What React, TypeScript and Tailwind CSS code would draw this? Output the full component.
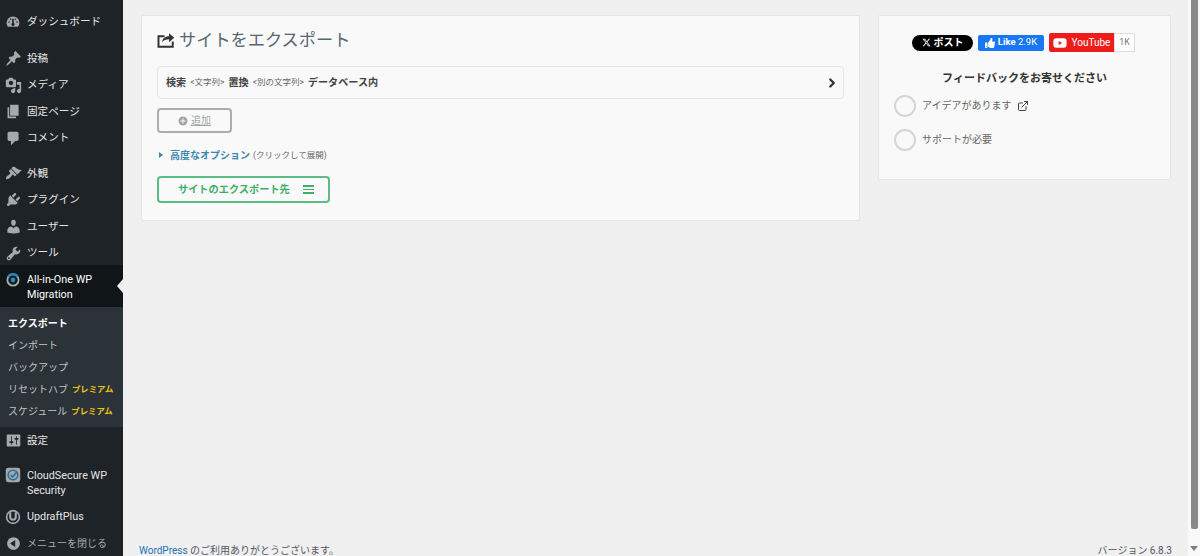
import React from "react";
import { FaThumbsUp, FaYoutube } from "react-icons/fa";
import { FaXTwitter } from "react-icons/fa6";
import { FiExternalLink, FiChevronRight } from "react-icons/fi";

const jp = "font-['Roboto','Noto_Sans_CJK_JP',sans-serif]";

const I = ({ d, cls = "" }: { d: string; cls?: string }) => (
  <svg viewBox="0 0 20 20" className={"fill-[#a7aaad] " + cls}>
    <path d={d} />
  </svg>
);

const icons: Record<string, string> = {
  dash: "M3.76 16h12.48A7.96 7.96 0 0 0 18 11a8 8 0 1 0-16 0c0 1.9.66 3.64 1.76 5zM10 15a2 2 0 0 1-1-3.73V6h2v5.27A2 2 0 0 1 10 15zM5 11a1 1 0 1 1 0-2 1 1 0 0 1 0 2zm10 0a1 1 0 1 1 0-2 1 1 0 0 1 0 2zM7 7.5a1 1 0 1 1 0-2 1 1 0 0 1 0 2zm6 0a1 1 0 1 1 0-2 1 1 0 0 1 0 2z",
  pin: "M10.44 3.02l1.82-1.82 6.36 6.35-1.83 1.82c-1.05-.68-2.48-.57-3.41.36l-.75.75c-.92.93-1.04 2.35-.35 3.41l-1.83 1.82-2.41-2.41-2.8 2.79c-.42.42-3.38 2.71-3.8 2.29s1.86-3.39 2.28-3.81l2.79-2.79L4.1 9.36l1.83-1.82c1.05.69 2.48.57 3.4-.36l.75-.75c.93-.92 1.05-2.35.36-3.41z",
  media: "M13 11V4c0-.55-.45-1-1-1h-1.67L9 1H5L3.67 3H2c-.55 0-1 .45-1 1v7c0 .55.45 1 1 1h10c.55 0 1-.45 1-1zM7 4.5c1.38 0 2.5 1.12 2.5 2.5S8.38 9.5 7 9.5 4.5 8.38 4.5 7 5.62 4.5 7 4.5zM14 6h5v10.5c0 1.38-1.12 2.5-2.5 2.5S14 17.88 14 16.5s1.12-2.5 2.5-2.5c.17 0 .34.02.5.05V9h-3V6zm-4 8.05V13h2v3.5c0 1.38-1.12 2.5-2.5 2.5S7 17.88 7 16.5 8.12 14 9.5 14c.17 0 .34.02.5.05z",
  page: "M6 15V2h10v13H6zm-1 1h8v2H3V5h2v11z",
  comment: "M5 2h9c1.1 0 2 .9 2 2v7c0 1.1-.9 2-2 2h-2l-5 5v-5H5c-1.1 0-2-.9-2-2V4c0-1.1.9-2 2-2z",
  brush: "M14.48 11.06L7.41 3.99l1.5-1.5c.5-.56 2.3-.47 3.51.32 1.21.8 1.43 1.28 2.91 2.1 1.18.64 2.45 1.26 4.45.85zm-.71.71L6.7 4.7 4.93 6.47c-.39.39-.39 1.02 0 1.41l1.06 1.06c.39.39.39 1.03 0 1.42-.6.6-1.43 1.11-2.21 1.69-.35.26-.7.53-1.01.84C1.43 13.23.78 15.81 1.4 16.43c.63.62 3.21-.02 4.55-1.37.31-.31.58-.66.84-1.01.58-.78 1.09-1.61 1.69-2.21.39-.39 1.02-.39 1.41 0l1.06 1.06c.39.39 1.03.39 1.42 0z",
  plugin: "M13.11 4.36L9.87 7.6 8 5.73l3.24-3.24c.35-.34 1.05-.2 1.56.32.52.51.66 1.21.31 1.55zm-8 1.77l.91-1.12 9.01 9.01-1.19.84c-.71.71-2.63 1.16-3.82 1.16H6.14L4.9 17.26c-.59.59-1.54.59-2.12 0-.59-.58-.59-1.53 0-2.12l1.24-1.24v-3.88c0-1.13.4-3.19 1.09-3.89zm7.26 3.97l3.24-3.24c.34-.35 1.04-.21 1.55.31.52.51.66 1.21.31 1.55l-3.24 3.25z",
  user: "M10 9.25c-2.27 0-2.73-3.44-2.73-3.44C7 4.02 7.82 2 9.97 2c2.16 0 2.98 2.02 2.71 3.81 0 0-.41 3.44-2.68 3.44zm0 2.57L12.72 10c2.39 0 4.52 2.33 4.52 4.53v2.49s-3.65 1.13-7.24 1.13c-3.65 0-7.24-1.13-7.24-1.13v-2.49c0-2.25 1.94-4.48 4.47-4.48z",
  tool: "M16.68 9.77c-1.34 1.34-3.3 1.67-4.95.99l-5.41 6.52c-.99.99-2.59.99-3.58 0s-.99-2.59 0-3.57l6.52-5.42c-.68-1.65-.35-3.61.99-4.95 1.28-1.28 3.12-1.62 4.72-1.06l-2.89 2.89 2.82 2.82 2.86-2.87c.53 1.58.18 3.39-1.08 4.65zM3.81 16.21c.4.39 1.04.39 1.43 0 .4-.4.4-1.04 0-1.43-.39-.4-1.03-.4-1.43 0-.39.39-.39 1.03 0 1.43z",
  settings: "M18 16V4c0-.55-.45-1-1-1H3c-.55 0-1 .45-1 1v12c0 .55.45 1 1 1h14c.55 0 1-.45 1-1zM8 11h1c.55 0 1 .45 1 1s-.45 1-1 1H8v1.5c0 .28-.22.5-.5.5s-.5-.22-.5-.5V13H6c-.55 0-1-.45-1-1s.45-1 1-1h1V5.5c0-.28.22-.5.5-.5s.5.22.5.5V11zm5-2h-1c-.55 0-1-.45-1-1s.45-1 1-1h1V5.5c0-.28.22-.5.5-.5s.5.22.5.5V7h1c.55 0 1 .45 1 1s-.45 1-1 1h-1v5.5c0 .28-.22.5-.5.5s-.5-.22-.5-.5V9z",
  collapse: "M10 2.5c-4.14 0-7.5 3.36-7.5 7.5s3.36 7.5 7.5 7.5 7.5-3.36 7.5-7.5-3.36-7.5-7.5-7.5zM12 14l-6-4 6-4v8z",
};

function Item({ icon, label, cls = "" }: { icon: React.ReactNode; label: string; cls?: string }) {
  return (
    <div className={"flex items-center h-[27px] pt-[2px] text-[10.6px] text-[#e6e6e7] " + cls}>
      <div className="w-[26px] flex justify-center shrink-0">{icon}</div>
      <span className="ml-[1px] whitespace-nowrap">{label}</span>
    </div>
  );
}

function Sidebar() {
  const s = "w-[17px] h-[17px]";
  return (
    <aside className={"w-[123px] shrink-0 h-[556px] overflow-hidden bg-[#1d2327] flex flex-col pt-[8px] " + jp}>
      <Item icon={<I d={icons.dash} cls="w-[16px] h-[16px]" />} label="ダッシュボード" />
      <div className="h-[10px]" />
      <Item icon={<I d={icons.pin} cls={s} />} label="投稿" />
      <Item icon={<I d={icons.media} cls={s} />} label="メディア" />
      <Item icon={<I d={icons.page} cls={s} />} label="固定ページ" />
      <Item icon={<I d={icons.comment} cls={s} />} label="コメント" />
      <div className="h-[9px]" />
      <Item icon={<I d={icons.brush} cls={s} />} label="外観" />
      <Item icon={<I d={icons.plugin} cls={s} />} label="プラグイン" />
      <Item icon={<I d={icons.user} cls={s} />} label="ユーザー" />
      <Item icon={<I d={icons.tool} cls={s} />} label="ツール" />
      <div className="relative h-[42px] pt-[2px] bg-[#101517] flex items-center text-[10.8px] text-white leading-[15px]">
        <div className="w-[26px] flex justify-center shrink-0 self-start pt-[5px]">
          <svg viewBox="0 0 20 20" className="w-[16px] h-[16px] fill-none">
            <circle cx="10" cy="10" r="7" stroke="#a7aaad" strokeWidth="2.4" />
            <path d="M4 6a7 7 0 0 1 12 0" stroke="#2a86b8" strokeWidth="3" />
            <circle cx="10" cy="10" r="3" fill="#2a86b8" />
          </svg>
        </div>
        <span className="ml-[1px]">All-in-One WP<br />Migration</span>
        <div className="absolute right-0 top-[14px] border-y-[7px] border-y-transparent border-r-[6px] border-r-[#f0f0f1]" />
      </div>
      <div className="bg-[#2c3338] pt-[6px] pb-[4px] pl-[8px] text-[10px] text-[#c3c4c7] flex flex-col whitespace-nowrap">
        <div className="h-[22px] flex items-center font-bold text-white">エクスポート</div>
        <div className="h-[22px] flex items-center">インポート</div>
        <div className="h-[22px] flex items-center">バックアップ</div>
        <div className="h-[22px] flex items-center">リセットハブ<span className="ml-[4px] text-[8.4px] font-bold text-[#f0c419]">プレミアム</span></div>
        <div className="h-[22px] flex items-center">スケジュール<span className="ml-[4px] text-[8.4px] font-bold text-[#f0c419]">プレミアム</span></div>
      </div>
      <Item icon={<I d={icons.settings} cls={s} />} label="設定" />
      <div className="h-[10px]" />
      <div className="flex h-[41px] items-center text-[10.8px] text-[#e6e6e7] leading-[15px]">
        <div className="w-[26px] flex justify-center shrink-0 self-start pt-[4px]">
          <svg viewBox="0 0 20 20" className="w-[16px] h-[16px] fill-none">
            <rect x="1" y="1" width="18" height="18" rx="3" fill="#a7aaad" />
            <circle cx="10" cy="10" r="6" stroke="#2b6f9e" strokeWidth="2" />
            <path d="M7 10l2.5 2.5L15 6" stroke="#2b6f9e" strokeWidth="2" />
          </svg>
        </div>
        <span className="ml-[1px]">CloudSecure WP<br />Security</span>
      </div>
      <div className="flex h-[27px] pt-[2px] items-center text-[10.8px] text-[#e6e6e7]">
        <div className="w-[26px] flex justify-center shrink-0">
          <svg viewBox="0 0 20 20" className="w-[16px] h-[16px] fill-none">
            <circle cx="10" cy="10" r="8" stroke="#a7aaad" strokeWidth="2" />
            <path d="M6.5 4v6a3.5 3.5 0 0 0 7 0V4" stroke="#a7aaad" strokeWidth="2.6" />
          </svg>
        </div>
        <span className="ml-[1px]">UpdraftPlus</span>
      </div>
      <Item icon={<I d={icons.collapse} cls={s} />} label="メニューを閉じる" cls="!text-[10px] !text-[#a7aaad]" />
    </aside>
  );
}

function Circle({ children }: { children: React.ReactNode }) {
  return (
    <div className="flex items-center gap-[6px]">
      <div className="w-[22px] h-[22px] rounded-full border-2 border-[#d5d5d5] bg-[#f9f9f9]" />
      <div className="flex items-center text-[10px] text-[#666]">{children}</div>
    </div>
  );
}

function Scrollbar() {
  return (
    <div className="w-[12px] shrink-0 h-[556px] bg-[#f9f9f9] flex flex-col items-center">
      <div className="w-[7px] h-[529px] bg-[#8a8a8a] rounded-b-[2px]" />
      <div className="mt-[17px] border-x-[4px] border-x-transparent border-t-[5px] border-t-[#808080]" />
    </div>
  );
}

export default function App() {
  return (
    <div className={"relative w-[1200px] h-[556px] overflow-hidden bg-[#f0f0f1] flex " + jp}>
      <Sidebar />
      <main className="flex-1 pl-[18px] pt-[15px] flex items-start gap-[18px]">
        <section className="w-[719px] h-[206px] bg-[#f9f9f9] border border-[#e5e5e5] rounded-[2px] pl-[15px] pr-[15px] pt-[10px] flex flex-col items-start">
          <div className="flex items-center h-[28px] pt-[2px] text-[17.2px] text-[#58666e]">
            <svg viewBox="0 0 24 24" className="w-[18px] h-[18px] mr-[4px] mt-[-3px] fill-none stroke-[#333]" strokeWidth="2.6">
              <path d="M21 14v7H2V7h8" />
              <path d="M7 15c0-5 4-8 9-8V3l7 6-7 6v-4c-4 0-7 1-9 4z" fill="#333" strokeWidth="0" />
            </svg>
            サイトをエクスポート
          </div>
          <div className="mt-[12px] w-full h-[33px] border border-[#e5e5e5] rounded-[4px] flex items-center justify-between pl-[8px] pr-[4px] text-[10.1px] font-bold text-[#444]">
            <div className="flex items-center">
              検索<span className="mx-[4px] text-[8.5px] font-normal text-[#666]">&lt;文字列&gt;</span>置換<span className="mx-[4px] text-[8.5px] font-normal text-[#666]">&lt;別の文字列&gt;</span>データベース内
            </div>
            <FiChevronRight className="w-[14px] h-[14px] text-[#333] stroke-[4]" />
          </div>
          <div className="mt-[9px] w-[75px] h-[25px] border-2 border-[#a5aeb3] rounded-[4px] flex items-center justify-center text-[10px] text-[#a0a5a8]">
            <svg viewBox="0 0 20 20" className="w-[10px] h-[10px] mr-[3px] fill-[#a0a5a8]">
              <path d="M10 1a9 9 0 1 0 0 18 9 9 0 0 0 0-18zm5 10h-4v4H9v-4H5V9h4V5h2v4h4z" />
            </svg>
            <span className="underline">追加</span>
          </div>
          <div className="mt-[14px] h-[16px] flex items-center text-[10px] font-bold text-[#3b86ad] ml-[2px]">
            <div className="border-y-[3px] border-y-transparent border-l-[4px] border-l-[#3b86ad] mr-[7px]" />
            高度なオプション
            <span className="ml-[3px] text-[8.5px] font-normal text-[#666]">(クリックして展開)</span>
          </div>
          <div className="mt-[13px] w-[173px] h-[27px] border-2 border-[#5dbb85] rounded-[4px] flex items-center pl-[19px] text-[10.2px] font-bold text-[#3fae6c]">
            サイトのエクスポート先
            <div className="ml-[13px] w-[11px] flex flex-col gap-[2px]">
              <div className="h-[1.5px] bg-[#3fae6c]" />
              <div className="h-[1.5px] bg-[#3fae6c]" />
              <div className="h-[1.5px] bg-[#3fae6c]" />
            </div>
          </div>
        </section>
        <section className="w-[293px] h-[165px] bg-[#f9f9f9] border border-[#e5e5e5] rounded-[2px] pl-[15px] pt-[17px] flex flex-col">
          <div className="flex items-center h-[19px] ml-[18px]">
            <div className="w-[61px] h-[16px] rounded-full bg-black flex items-center justify-center text-[10px] font-bold text-white">
              <FaXTwitter className="w-[9px] h-[9px] mr-[3px]" />ポスト
            </div>
            <div className="ml-[5px] w-[66px] h-[16px] rounded-[2px] bg-[#1877f2] flex items-center justify-center text-[9.5px] text-white">
              <FaThumbsUp className="w-[10px] h-[10px] mr-[3px]" /><b>Like</b>&nbsp;2.9K
            </div>
            <div className="ml-[5px] w-[65px] h-[19px] rounded-l-[2px] bg-[#ee1d1d] flex items-center justify-center text-[10px] text-white">
              <FaYoutube className="w-[14px] h-[14px] mr-[5px]" />YouTube
            </div>
            <div className="w-[21px] h-[19px] border border-[#ddd] bg-white flex items-center justify-center text-[9px] text-[#777]">1K</div>
          </div>
          <div className="mt-[19px] text-center text-[11px] font-bold text-[#333] w-[261px]">フィードバックをお寄せください</div>
          <div className="mt-[7px] flex flex-col gap-[12px]">
            <Circle>アイデアがあります<FiExternalLink className="ml-[5px] w-[12px] h-[12px] text-[#444]" /></Circle>
            <Circle>サポートが必要</Circle>
          </div>
        </section>
      </main>
      <Scrollbar />
      <div className="absolute left-[139px] bottom-[-2px] text-[10px] leading-[14px] text-[#50575e]">
        <span className="text-[#2271b1]">WordPress</span> のご利用ありがとうございます。
      </div>
      <div className="absolute right-[28px] bottom-[-2px] text-[10px] leading-[14px] text-[#50575e]">バージョン 6.8.3</div>
    </div>
  );
}
